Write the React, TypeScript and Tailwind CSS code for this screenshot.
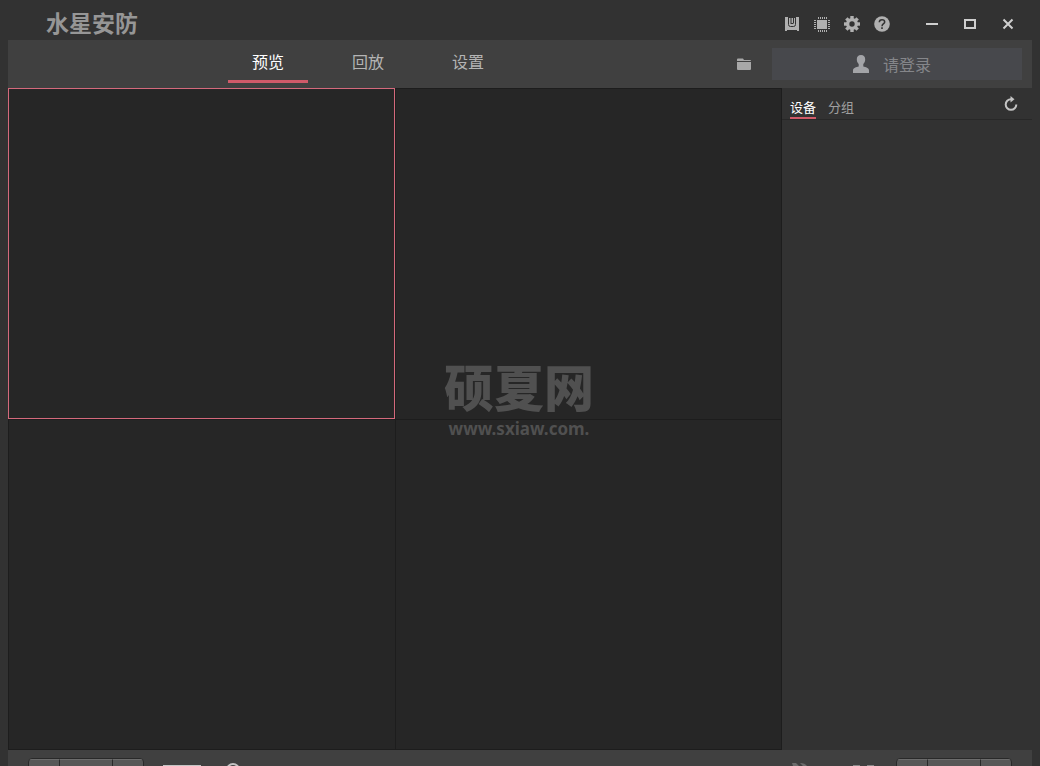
import { useState } from 'react'
import type { ReactNode } from 'react'

const navTabs = ['预览', '回放', '设置']
const sideTabs = ['设备', '分组']

function SaveIcon() {
  return (
    <svg width="14" height="14" viewBox="0 0 14 14" aria-hidden="true">
      <path fill="currentColor" d="M0 0h14v14h-2v-1H2v1H0z" />
      <path fill="none" stroke="#323232" d="M3.500 0v7.500q0 2 2 2h3q2 0 2-2V0" />
      <path fill="#323232" d="M5.500 0h1v6h-1zM5.500 6h3v1h-3zM8 1h1v5H8zM4 0h6v1H4z" />
    </svg>
  )
}

function ChipIcon() {
  return (
    <svg width="16" height="16" viewBox="0 0 16 16" aria-hidden="true">
      <path fill="currentColor" d="M3 4h10v9H3z" />
      <path stroke="currentColor" strokeDasharray="1 1" strokeWidth="2" d="M4 2h9M4 15h9M1 4v9M15 4v9" />
    </svg>
  )
}

function GearIcon() {
  return (
    <svg width="16" height="16" viewBox="0 0 16 16" aria-hidden="true">
      <g fill="currentColor">
        <path d="M6.300 0h3.400v16H6.300z" />
        <path d="M6.300 0h3.400v16H6.300z" transform="rotate(45 8 8)" />
        <path d="M6.300 0h3.400v16H6.300z" transform="rotate(90 8 8)" />
        <path d="M6.300 0h3.400v16H6.300z" transform="rotate(135 8 8)" />
        <circle cx="8" cy="8" r="6" />
      </g>
      <circle cx="8" cy="8" r="2.700" fill="#323232" />
    </svg>
  )
}

function HelpIcon() {
  return (
    <svg width="16" height="16" viewBox="0 0 16 16" aria-hidden="true">
      <circle cx="8" cy="8" r="7.800" fill="currentColor" />
      <path fill="none" stroke="#323232" strokeWidth="1.500" d="M5.300 6.300C5.300 4.500 6.500 3.700 8 3.700s2.700.8 2.700 2.200C10.700 7.600 8 7.700 8 10.200" />
      <path fill="#323232" d="M7.200 11.300h1.600v1.600H7.200z" />
    </svg>
  )
}

function UserIcon() {
  return (
    <svg width="16" height="18" viewBox="0 0 16 18" aria-hidden="true">
      <path fill="currentColor" d="M8 0c2.800 0 4.200 1.700 4.200 4.200 0 2-.7 3.700-1.900 4.700v2.600c2.300.7 5.700 1.300 5.700 3.900V18H0v-2.600c0-2.600 3.400-3.200 5.700-3.900V8.900C4.500 7.900 3.800 6.200 3.800 4.200 3.800 1.700 5.200 0 8 0z" />
    </svg>
  )
}

function FolderIcon() {
  return (
    <svg width="14" height="12" viewBox="0 0 14 12" aria-hidden="true">
      <path fill="currentColor" d="M0 1.500Q0 .5 1 .5h5l1 1.500h6q1 0 1 1H0zM0 4h14v7q0 1-1 1H1q-1 0-1-1z" />
    </svg>
  )
}

function RefreshIcon() {
  return (
    <svg width="14" height="16" viewBox="0 0 14 16" aria-hidden="true">
      <path fill="none" stroke="currentColor" strokeWidth="2" d="M7.500 3.200H7a5.300 5.300 0 1 0 5.300 5.300" />
      <path fill="currentColor" d="M6.500 0l4 3.200-4 3.300z" />
    </svg>
  )
}

function IconButton({ label, children }: { label: string; children: ReactNode }) {
  return (
    <button type="button" aria-label={label} className="flex h-6 w-[30px] items-center justify-center hover:text-white">
      {children}
    </button>
  )
}

function WindowButton({ label, d }: { label: string; d: string }) {
  return (
    <button type="button" aria-label={label} className="flex h-6 w-[38px] items-center justify-center text-[#cfcfcf] hover:text-white">
      <svg width="12" height="12" viewBox="0 0 12 12" fill="none" stroke="currentColor" strokeWidth="2" aria-hidden="true">
        <path d={d} />
      </svg>
    </button>
  )
}

// Three joined buttons, used at both ends of the toolbar
function SplitButtons({ labels }: { labels: string[] }) {
  return (
    <div className="flex h-8 w-29 divide-x divide-[#292929] overflow-hidden rounded-sm border border-[#292929] bg-[#575757]">
      <button type="button" aria-label={labels[0]} className="w-[31px] border-t border-t-[#6c6c6c]" />
      <button type="button" aria-label={labels[1]} className="flex-1 border-t border-t-[#6c6c6c]" />
      <button type="button" aria-label={labels[2]} className="w-[30px] border-t border-t-[#6c6c6c]" />
    </div>
  )
}

export default function App() {
  const [nav, setNav] = useState(0)
  const [side, setSide] = useState(0)
  const [pane, setPane] = useState(0)

  return (
    <div className="relative flex h-screen flex-col overflow-hidden bg-[#323232] px-2 font-['Noto_Sans_CJK_SC',sans-serif] text-[#b4b4b4]">
      {/* Title bar */}
      <header className="flex h-10 shrink-0 items-center justify-between pt-2 pr-[5px] pl-[38px]">
        <h1 className="pb-1 text-[23px] leading-7 font-bold text-[#969696]">水星安防</h1>
        <div className="flex items-center text-[#b0b0b0]">
          <IconButton label="保存"><SaveIcon /></IconButton>
          <IconButton label="性能"><ChipIcon /></IconButton>
          <IconButton label="系统设置"><GearIcon /></IconButton>
          <IconButton label="帮助"><HelpIcon /></IconButton>
          <div className="ml-4 flex">
            <WindowButton label="最小化" d="M0 6h12" />
            <WindowButton label="最大化" d="M1 2h10v8H1z" />
            <WindowButton label="关闭" d="M1.500 1.500l9 9M10.500 1.500l-9 9" />
          </div>
        </div>
      </header>

      {/* Main navigation */}
      <nav className="flex h-12 shrink-0 items-center bg-[#404040] pr-[10px] pl-55">
        <div className="flex flex-1 gap-5">
          {navTabs.map((tab, i) => (
            <button
              key={tab}
              type="button"
              onClick={() => setNav(i)}
              className={`h-[38px] w-20 border-b-3 pb-1 text-base leading-6 ${nav === i ? 'border-[#d05a69] text-white' : 'border-transparent text-[#b4b4b4]'}`}
            >
              {tab}
            </button>
          ))}
        </div>
        <button type="button" aria-label="打开文件夹" className="mr-5 flex size-4 items-center justify-center text-[#a8a8a8]">
          <FolderIcon />
        </button>
        <button type="button" className="flex h-8 w-[250px] items-center justify-center gap-[14px] bg-[#47484c] pr-[10px] text-base text-[#85868a]">
          <span className="text-[#a3a4a8]"><UserIcon /></span>
          请登录
        </button>
      </nav>

      <div className="flex min-h-0 flex-1">
        {/* Video panes */}
        <main className="grid flex-1 grid-cols-2 grid-rows-2 border-r border-b border-[#1d1d1d] bg-[#262626]">
          {[0, 1, 2, 3].map(i => (
            <button
              key={i}
              type="button"
              aria-label={`画面 ${i + 1}`}
              onClick={() => setPane(i)}
              className={pane === i ? 'border border-[#d4697c]' : 'border-t border-l border-[#1d1d1d]'}
            />
          ))}
        </main>

        {/* Device list */}
        <aside className="w-[250px]">
          <div className="flex h-8 items-start justify-between border-b border-[#282828] pr-[14px] pl-2">
            <div className="flex gap-3 pt-[10px]">
              {sideTabs.map((tab, i) => (
                <button
                  key={tab}
                  type="button"
                  onClick={() => setSide(i)}
                  className={`border-b-2 pb-px text-[13px] leading-[18px] ${side === i ? 'border-[#d05a69] text-white' : 'border-transparent text-[#a0a0a0]'}`}
                >
                  {tab}
                </button>
              ))}
            </div>
            <button type="button" aria-label="刷新" className="mt-2 text-[#c4c4c4]">
              <RefreshIcon />
            </button>
          </div>
        </aside>
      </div>

      {/* Playback toolbar */}
      <footer className="flex h-4 shrink-0 items-start justify-between overflow-hidden bg-[#404040] px-5 pt-2">
        <div className="flex">
          <SplitButtons labels={['画面布局', '布局选项', '更多布局']} />
          <svg width="96" height="8" viewBox="0 0 96 8" className="ml-4" aria-hidden="true">
            <path fill="#c4c4c4" d="M3 7h38v1H3z" />
            <circle cx="73" cy="12" r="6" fill="none" stroke="#c4c4c4" strokeWidth="2" />
          </svg>
        </div>
        <div className="flex">
          <svg width="88" height="8" viewBox="0 0 88 8" className="mr-4" aria-hidden="true">
            <path fill="#6c6c6c" d="M0 5h4l3 3H1zM8 5q5 0 7 3h-4z" />
            <path fill="#888888" d="M61 7h7v1h-7zM75 7h7v1h-7z" />
          </svg>
          <SplitButtons labels={['音量', '音量选项', '全屏']} />
        </div>
      </footer>

      {/* Watermark */}
      <div className="pointer-events-none absolute inset-x-0 top-[357px] flex flex-col items-center pr-[2px] text-[#505050]">
        <span className="text-[50px] leading-14 font-black">硕夏网</span>
        <span className="font-['Noto_Sans',sans-serif] text-[17px] leading-8 font-bold">
          www.sxiaw.com.
        </span>
      </div>
    </div>
  )
}
